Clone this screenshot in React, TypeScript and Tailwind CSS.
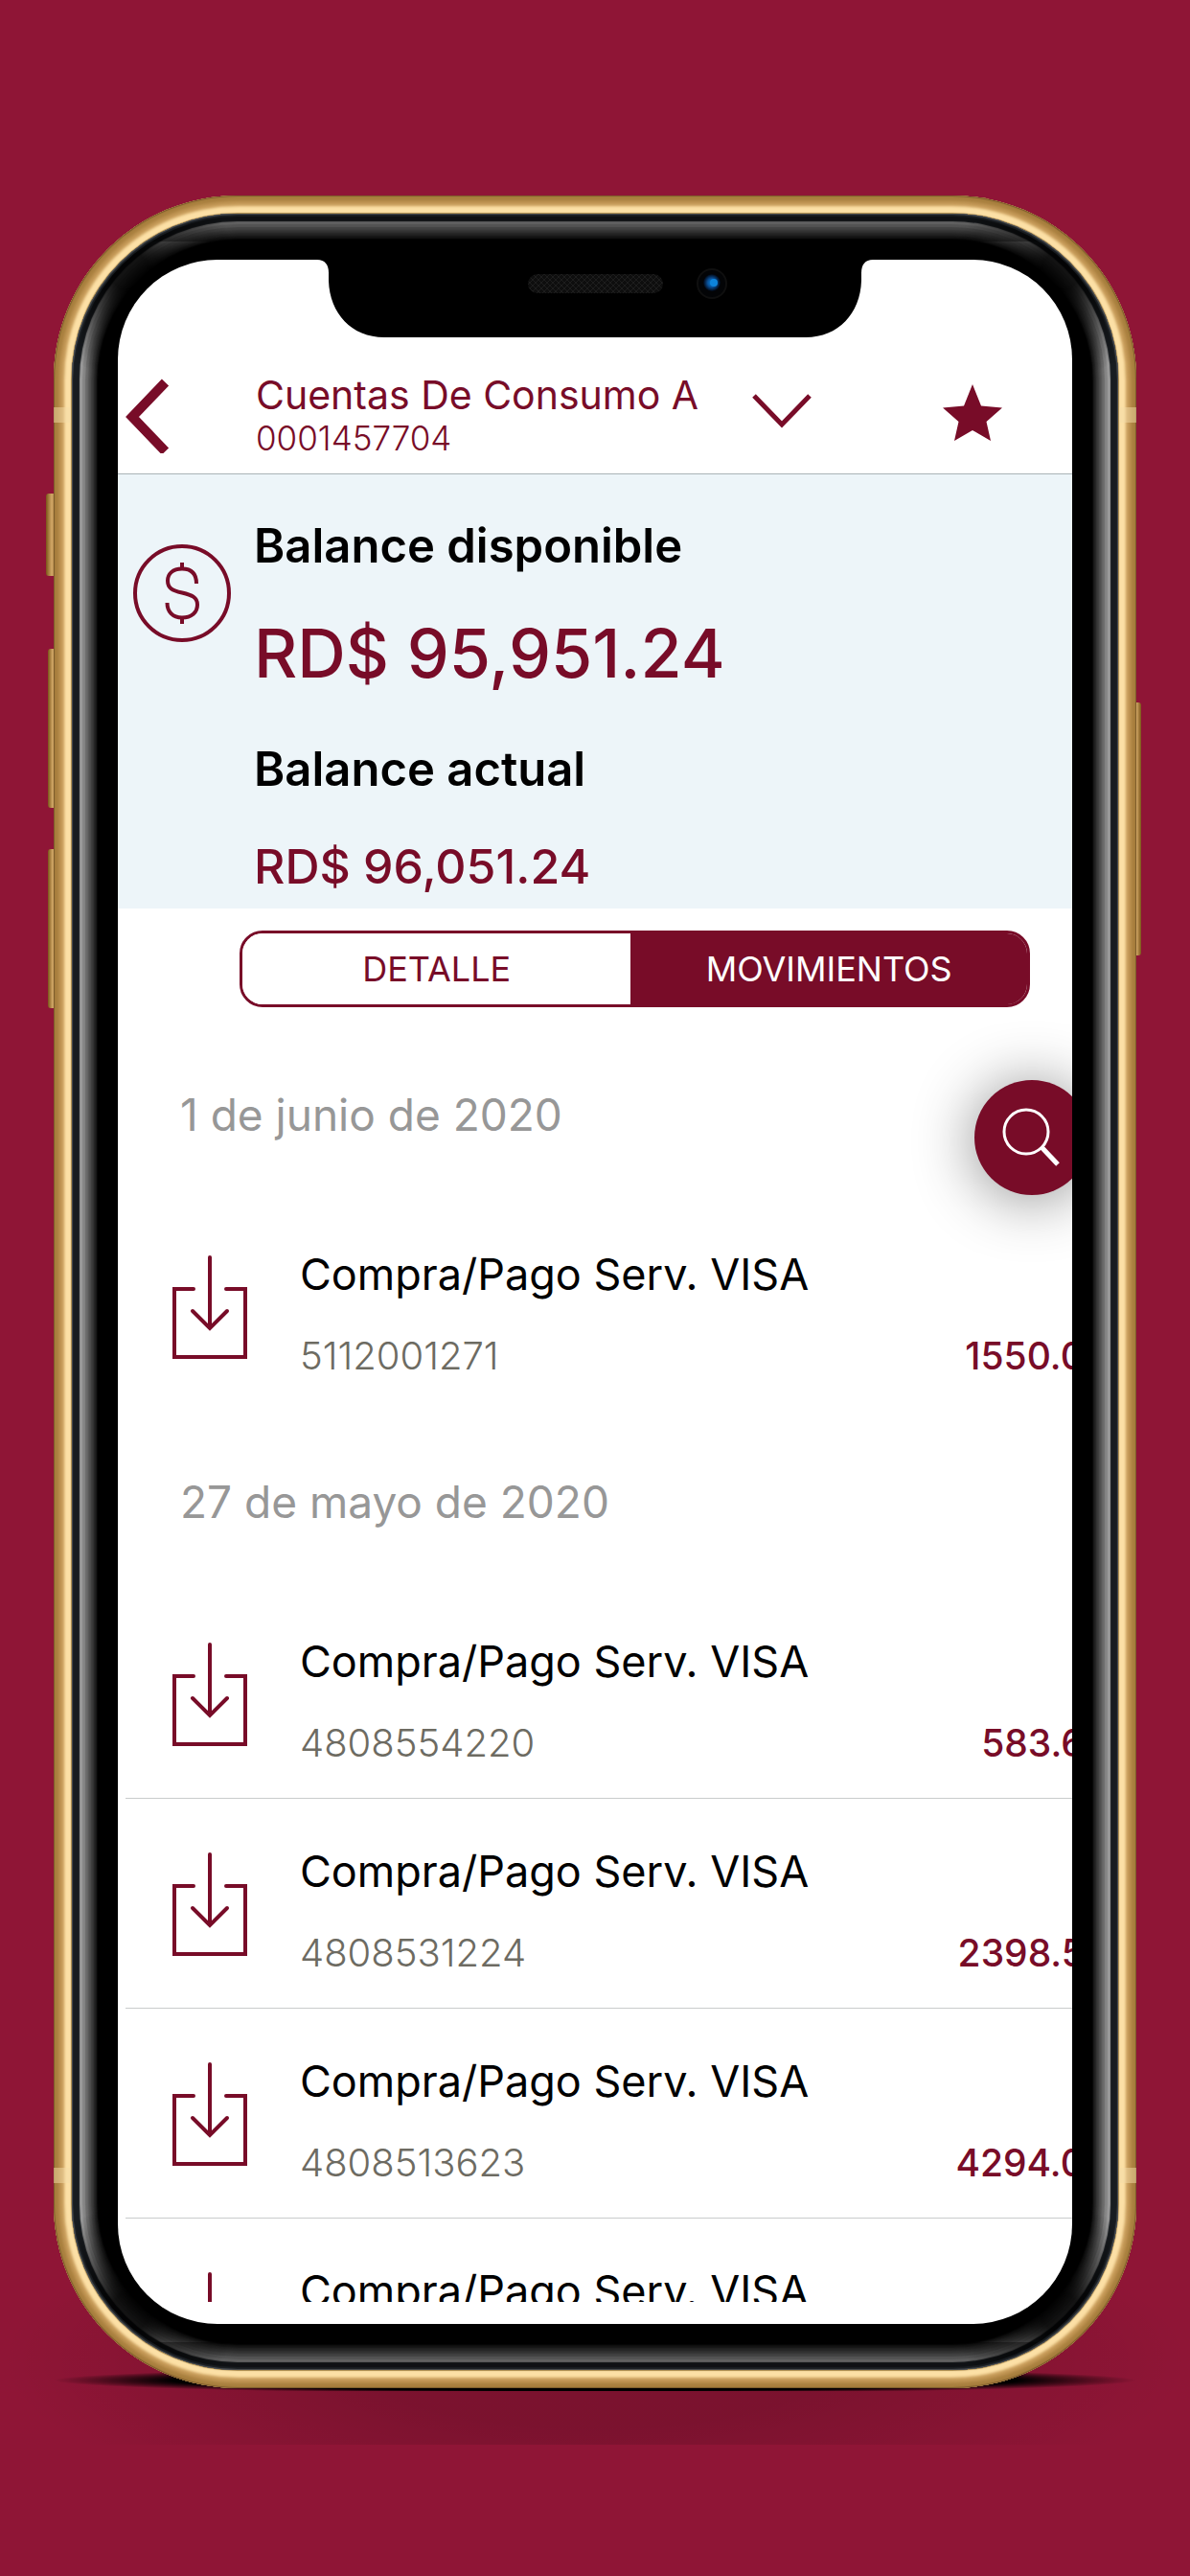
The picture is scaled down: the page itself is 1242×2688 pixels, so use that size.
type Movement = { id: string; title: string; reference: string; amount: string };
type MovementGroup = { date: string; divided: boolean; movements: Movement[] };

const groups: MovementGroup[] = [
  {
    date: "1 de junio de 2020",
    divided: false,
    movements: [{ id: "m1", title: "Compra/Pago Serv. VISA", reference: "5112001271", amount: "1550.00" }],
  },
  {
    date: "27 de mayo de 2020",
    divided: true,
    movements: [
      { id: "m2", title: "Compra/Pago Serv. VISA", reference: "4808554220", amount: "583.60" },
      { id: "m3", title: "Compra/Pago Serv. VISA", reference: "4808531224", amount: "2398.50" },
      { id: "m4", title: "Compra/Pago Serv. VISA", reference: "4808513623", amount: "4294.00" },
    ],
  },
];

function DownloadIcon() {
  return (
    <svg className="h-[108px] w-[78px] shrink-0" viewBox="0 0 78 108" fill="none" stroke="#780c28" strokeWidth="4">
      <path d="M22 35H2V106H76V35H56" strokeLinecap="round" />
      <path d="M39 2V74" strokeLinecap="round" />
      <path d="M21 58L39 76L57 58" strokeLinecap="round" />
    </svg>
  );
}

function Header() {
  return (
    <header className="flex items-center border-b border-[#aab4b7] pt-[117px] pr-[73px] pb-4 pl-2">
      <button type="button" aria-label="Volver" className="mr-[90px] shrink-0">
        <svg className="h-20 w-[46px]" viewBox="0 0 46 80" fill="none" stroke="#780c28" strokeWidth="10">
          <path d="M41.500 6L7 42L41.500 78" />
        </svg>
      </button>
      <div className="shrink-0 text-[#780c28]">
        <h1 className="text-[41px] leading-[48px]">Cuentas De Consumo A</h1>
        <p className="text-[35px] leading-[42px] font-light">0001457704</p>
      </div>
      <button type="button" aria-label="Cambiar cuenta" className="ml-14 shrink-0">
        <svg className="h-11 w-[62px]" viewBox="0 0 62 44" fill="none" stroke="#780c28" strokeWidth="5">
          <path d="M2 2L31 32L60 2" />
        </svg>
      </button>
      <button type="button" aria-label="Favorito" className="ml-auto shrink-0">
        <svg className="h-16 w-[62px]" viewBox="0 0 62 64" fill="#780c28">
          <path d="M31 0L40 22.500L62 24.500L45.500 39L50 59L31 48L12 59L16.500 39L0 24.500L22 22.500Z" />
        </svg>
      </button>
    </header>
  );
}

function Balances() {
  return (
    <section className="flex gap-6 bg-[#edf5f9] pt-[45px] pb-[14px] pl-4">
      <svg
        className="mt-7 h-[102px] w-[102px] shrink-0"
        viewBox="0 0 102 102"
        fill="none"
        stroke="#780c28"
        strokeWidth="4"
      >
        <circle cx="51" cy="51" r="49" />
        <path d="M51 19V26M51 76V83" />
        <path d="M66 41C66 31 61 25.500 51 25.500S36 31 36 38C36 46 41 48 51 50.500S67 55 67 63C67 71 61 76.500 51 76.500S35.500 70 35.500 61" />
      </svg>
      <dl>
        <dt className="text-[49px] leading-[60px] font-semibold text-black">Balance disponible</dt>
        <dd className="mt-[42px] text-[70px] leading-[80px] font-medium text-[#780c28]">RD$ 95,951.24</dd>
        <dt className="mt-[51px] text-[49px] leading-[60px] font-semibold text-black">Balance actual</dt>
        <dd className="mt-[41px] text-[50px] leading-[60px] font-medium text-[#780c28]">RD$ 96,051.24</dd>
      </dl>
    </section>
  );
}

function Tabs() {
  return (
    <div
      role="tablist"
      className="mt-[23px] mr-11 ml-[127px] grid h-20 grid-cols-[49fr_50fr] overflow-hidden rounded-[24px] border-[3px] border-[#780c28] text-[36px]"
    >
      <button type="button" role="tab" aria-selected="false" className="bg-white text-[#780c28]">
        DETALLE
      </button>
      <button type="button" role="tab" aria-selected="true" className="bg-[#780c28] text-white">
        MOVIMIENTOS
      </button>
    </div>
  );
}

function MovementRow({ movement }: { movement: Movement }) {
  return (
    <li className="flex border-b border-inherit pt-12 pb-[37px] pl-[49px]">
      <div className="mt-2 mr-[55px]">
        <DownloadIcon />
      </div>
      <div className="grow">
        <h3 className="text-[45px] leading-[56px] text-black">{movement.title}</h3>
        <p className="mt-[37px] text-[40px] leading-[40px] font-light text-[#6d6b62]">{movement.reference}</p>
      </div>
      <p className="self-end text-[39px] leading-[40px] font-medium text-[#780c28]">{movement.amount}</p>
    </li>
  );
}

function Movements() {
  return (
    <div className="-mr-[38px] ml-2 pt-[18px]">
      {groups.map((group) => (
        <section key={group.date}>
          <h2 className="flex h-[185px] items-center pt-1 pl-[57px] text-[46px] text-[#979797]">{group.date}</h2>
          <ul className={group.divided ? "border-[#c9cccc]" : "border-transparent"}>
            {group.movements.map((movement) => (
              <MovementRow key={movement.id} movement={movement} />
            ))}
          </ul>
        </section>
      ))}
      {/* next row, cut by the end of the scroll area */}
      <ul className="h-[87px] overflow-hidden">
        <MovementRow
          movement={{ id: "m5", title: "Compra/Pago Serv. VISA", reference: "4808501198", amount: "750.00" }}
        />
      </ul>
    </div>
  );
}

function Notch() {
  return (
    <svg className="absolute inset-x-0 top-0 mx-auto h-[82px] w-[580px]" viewBox="0 0 580 82">
      <defs>
        <pattern id="mesh" width="6" height="6" patternUnits="userSpaceOnUse">
          <rect width="6" height="6" fill="#0e0e0e" />
          <path d="M0 0L6 6M6 0L0 6" stroke="#1d1d1d" strokeWidth="1" />
        </pattern>
        <radialGradient id="lens">
          <stop offset="0" stopColor="#0a86dc" />
          <stop offset="0.500" stopColor="#0a4f96" />
          <stop offset="1" stopColor="#010510" />
        </radialGradient>
      </defs>
      <path d="M0 0C8 0 12 5 12 14V22C13 56 36 81 70 81H510C544 81 567 56 568 22V14C568 5 572 0 580 0Z" />
      <rect x="220" y="15" width="141" height="20" rx="10" fill="url(#mesh)" />
      <circle cx="412" cy="25" r="15" fill="#030406" stroke="#0f0f0f" strokeWidth="2" />
      <circle cx="412" cy="24" r="9" fill="url(#lens)" />
      <circle cx="414" cy="24" r="4" fill="#0d84dc" />
    </svg>
  );
}

// Keys stick out of the rim on both sides of the device.
function SideKeys() {
  return (
    <>
      <svg className="absolute inset-y-0 -left-2 h-full w-3">
        <defs>
          <linearGradient id="key">
            <stop offset="0" stopColor="#7a5518" />
            <stop offset="0.500" stopColor="#d3a968" />
            <stop offset="1" stopColor="#7a5518" />
          </linearGradient>
        </defs>
        <rect x="0" y="311" width="12" height="86" rx="3" fill="url(#key)" />
        <rect x="2" y="473" width="10" height="166" rx="3" fill="url(#key)" />
        <rect x="2" y="682" width="10" height="166" rx="3" fill="url(#key)" />
      </svg>
      <svg className="absolute inset-y-0 -right-[5px] h-full w-[10px]">
        <rect x="0" y="529" width="10" height="264" rx="3" fill="url(#key)" />
      </svg>
    </>
  );
}

function AntennaLines() {
  return (
    <div className="absolute inset-0 flex flex-col justify-between pt-[221px] pb-[214px]">
      <div className="h-4 border-x-[18px] border-[#f3dca8]/50" />
      <div className="h-4 border-x-[18px] border-[#f3dca8]/50" />
    </div>
  );
}

export default function App() {
  return (
    <main className="min-h-screen overflow-hidden bg-[#8f1536] px-14 pt-[204px] pb-[194px] font-['Inter','Liberation_Sans',sans-serif]">
      <div className="relative">
        {/* floor shadow */}
        <div className="absolute -inset-x-14 -bottom-[59px] h-[220px] bg-[radial-gradient(ellipse_50%_80%_at_50%_60%,rgba(0,0,0,0.14)_40%,transparent)]" />
        <div className="absolute inset-x-0 -bottom-[3px] h-7 bg-[radial-gradient(ellipse_50%_50%_at_50%_60%,black_78%,transparent)]" />
        <SideKeys />
        <div className="relative rounded-[192px] bg-[#a5854a] p-[19px] shadow-[inset_0_0_1px_1px_#7b5a2a,inset_0_0_3px_5px_#a87f3e,inset_0_0_4px_8px_#b88d4c,inset_0_0_3px_11px_#cfa462,inset_0_0_1px_18px_#fce0a6]">
          <AntennaLines />
          <div className="relative rounded-[173px] bg-black p-[48px] shadow-[inset_0_0_1px_1px_#4a4e52,inset_0_0_1px_8px_#181c20,inset_0_0_1px_11px_#9c9c9c,inset_0_0_1px_14px_#868686,inset_0_0_2px_17px_#6c6c6c,inset_0_0_2px_20px_#525252,inset_0_0_2px_23px_#3a3a3a,inset_0_0_2px_26px_#202020]">
            {/* glass edge: dimmed along the top and bottom, dark in the corners */}
            <div className="absolute inset-[3px] rounded-[170px] bg-[linear-gradient(#00000060_26px,transparent_26px,transparent_calc(100%-26px),#00000060_calc(100%-26px)),radial-gradient(circle_at_58px_58px,#000000e0_20px,transparent_110px),radial-gradient(circle_at_calc(100%-58px)_58px,#000000e0_20px,transparent_110px),radial-gradient(circle_at_58px_calc(100%-58px),#000000e0_20px,transparent_110px),radial-gradient(circle_at_calc(100%-58px)_calc(100%-58px),#000000e0_20px,transparent_110px)]" />
            <div className="relative overflow-hidden rounded-[104px] bg-white pb-[23px]">
              <Notch />
              <Header />
              <Balances />
              <Tabs />
              <Movements />
              <button
                type="button"
                aria-label="Buscar"
                className="absolute top-[856px] -right-[18px] flex size-[120px] items-center justify-center rounded-full bg-[#780c28] shadow-[0_4px_64px_rgba(0,0,0,0.45)]"
              >
                <svg className="size-16" viewBox="0 0 64 64" fill="none" stroke="white">
                  <circle cx="26" cy="26" r="23" strokeWidth="3" />
                  <path d="M42 42L59 60" strokeWidth="5" />
                </svg>
              </button>
            </div>
          </div>
        </div>
      </div>
    </main>
  );
}
